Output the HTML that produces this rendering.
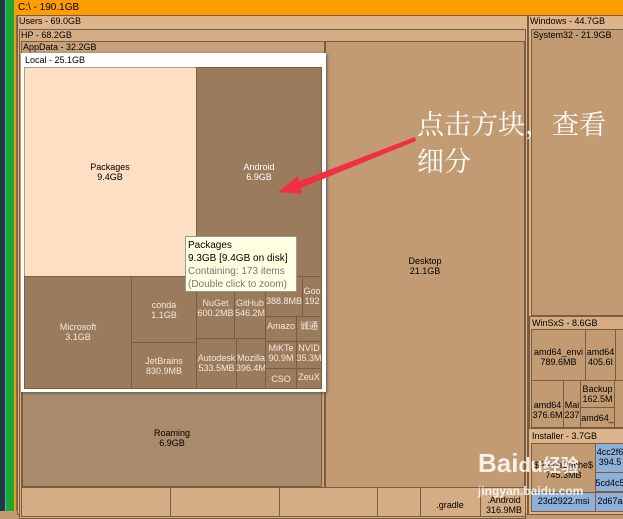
<!DOCTYPE html>
<html><head><meta charset="utf-8"><style>
*{margin:0;padding:0}
body{width:623px;height:511px;overflow:hidden;position:relative;background:#c29b73;font-family:"Liberation Sans",Tahoma,sans-serif;font-size:9px;}
.b{position:absolute;box-sizing:border-box;border:1px solid #7a5c40;overflow:hidden}
.l{position:absolute;font-size:9px;color:#000;white-space:nowrap;line-height:12px}
.c{position:absolute;text-align:center;white-space:nowrap;line-height:10px;font-size:9px}
.dk{background:#9a7b5c}
.w{color:#f4eadc}
</style></head><body>
<!-- left strips -->
<div style="position:absolute;left:0;top:0;width:5px;height:511px;background:#1f3b3c"></div>
<div style="position:absolute;left:5px;top:0;width:1px;height:511px;background:#5ad"></div>
<div style="position:absolute;left:6px;top:0;width:8px;height:511px;background:#1aa832"></div>
<div style="position:absolute;left:14px;top:0;width:2px;height:511px;background:#f39a1a"></div>
<div style="position:absolute;left:16px;top:0;width:2px;height:511px;background:#8a6a4a"></div>
<!-- orange header -->
<div style="position:absolute;left:15px;top:0;width:608px;height:15px;background:#ff9c00"></div>
<div class="l" style="left:18px;top:2px;font-size:10px">C:\ - 190.1GB</div>
<!-- Users -->
<div class="b" style="left:17px;top:15px;width:511px;height:500px;background:#ddb58c"></div>
<div class="l" style="left:19px;top:15px">Users - 69.0GB</div>
<!-- HP -->
<div class="b" style="left:19px;top:29px;width:507px;height:490px;background:#d5ad85"></div>
<div class="l" style="left:21px;top:29px">HP - 68.2GB</div>
<!-- Desktop -->
<div class="b" style="left:325px;top:41px;width:200px;height:447px;background:#c29b73"></div>
<div class="c" style="left:400px;top:256px;width:50px">Desktop<br>21.1GB</div>
<!-- AppData -->
<div class="b" style="left:21px;top:41px;width:304px;height:447px;background:#c9a27b"></div>
<div class="l" style="left:23px;top:41px">AppData - 32.2GB</div>
<!-- Roaming -->
<div class="b dk" style="left:22px;top:390px;width:300px;height:97px;background:#a98a6a"></div>
<div class="c" style="left:147px;top:428px;width:50px">Roaming<br>6.9GB</div>
<!-- bottom row -->
<div class="b" style="left:21px;top:487px;width:150px;height:30px"></div>
<div class="b" style="left:170px;top:487px;width:110px;height:30px"></div>
<div class="b" style="left:279px;top:487px;width:99px;height:30px"></div>
<div class="b" style="left:377px;top:487px;width:44px;height:30px"></div>
<div class="b" style="left:420px;top:487px;width:61px;height:30px"></div>
<div class="c" style="left:430px;top:500px;width:40px">.gradle</div>
<div class="b" style="left:480px;top:487px;width:46px;height:30px"></div>
<div class="c" style="left:482px;top:495px;width:44px">.Android<br>316.9MB</div>
<!-- Local -->
<div style="position:absolute;left:21px;top:53px;width:305px;height:339px;background:#fff;box-shadow:1px 1px 3px #555"></div>
<div class="l" style="left:25px;top:54px;color:#000">Local - 25.1GB</div>
<div class="b" style="left:24px;top:67px;width:173px;height:210px;background:#fddfc3;border-color:#b89a7a"></div>
<div class="c" style="left:85px;top:162px;width:50px">Packages<br>9.4GB</div>
<div class="b dk" style="left:196px;top:67px;width:126px;height:210px"></div>
<div class="c w" style="left:234px;top:162px;width:50px;color:#fff">Android<br>6.9GB</div>
<div class="b dk" style="left:24px;top:276px;width:108px;height:113px"></div>
<div class="c w" style="left:53px;top:322px;width:50px">Microsoft<br>3.1GB</div>
<div class="b dk" style="left:131px;top:276px;width:66px;height:67px"></div>
<div class="c w" style="left:139px;top:300px;width:50px">conda<br>1.1GB</div>
<div class="b dk" style="left:131px;top:342px;width:66px;height:47px"></div>
<div class="c w" style="left:139px;top:356px;width:50px">JetBrains<br>830.9MB</div>
<div class="b dk" style="left:196px;top:276px;width:39px;height:63px"></div>
<div class="c w" style="left:196px;top:298px;width:39px">NuGet<br>600.2MB</div>
<div class="b dk" style="left:234px;top:276px;width:32px;height:63px"></div>
<div class="c w" style="left:234px;top:298px;width:32px">GitHub<br>546.2M</div>
<div class="b dk" style="left:265px;top:276px;width:38px;height:41px"></div>
<div class="c w" style="left:265px;top:296px;width:38px">388.8MB</div>
<div class="b dk" style="left:302px;top:276px;width:20px;height:41px"></div>
<div class="c w" style="left:302px;top:286px;width:20px">Goo<br>192</div>
<div class="b dk" style="left:265px;top:316px;width:32px;height:26px"></div>
<div class="c w" style="left:265px;top:321px;width:32px">Amazo</div>
<div class="b dk" style="left:296px;top:316px;width:26px;height:26px"></div>
<div class="c w" style="left:296px;top:321px;width:26px">诚通</div>
<div class="b dk" style="left:196px;top:338px;width:41px;height:51px"></div>
<div class="c w" style="left:196px;top:353px;width:41px">Autodesk<br>533.5MB</div>
<div class="b dk" style="left:236px;top:338px;width:30px;height:51px"></div>
<div class="c w" style="left:236px;top:353px;width:30px">Mozilla<br>396.4M</div>
<div class="b dk" style="left:265px;top:341px;width:32px;height:28px"></div>
<div class="c w" style="left:265px;top:343px;width:32px">MiKTe<br>90.9M</div>
<div class="b dk" style="left:296px;top:341px;width:26px;height:28px"></div>
<div class="c w" style="left:296px;top:343px;width:26px">NVID<br>35.3M</div>
<div class="b dk" style="left:265px;top:368px;width:32px;height:21px"></div>
<div class="c w" style="left:265px;top:374px;width:32px">CSO</div>
<div class="b dk" style="left:296px;top:368px;width:26px;height:21px"></div>
<div class="c w" style="left:296px;top:372px;width:26px">ZeuX</div>
<!-- tooltip -->
<div style="position:absolute;left:185px;top:236px;width:112px;height:56px;box-sizing:border-box;background:#ffffe1;border:1px solid #999;padding:2px 2px;font-size:10px;line-height:13px;white-space:nowrap;overflow:hidden">Packages<br>9.3GB [9.4GB on disk]<br><span style="color:#777">Containing: 173 items<br>(Double click to zoom)</span></div>
<!-- Windows -->
<div class="b" style="left:528px;top:15px;width:96px;height:500px;background:#ddb58c"></div>
<div class="l" style="left:530px;top:15px">Windows - 44.7GB</div>
<div class="b" style="left:531px;top:29px;width:93px;height:287px;background:#c29b73"></div>
<div class="l" style="left:533px;top:29px">System32 - 21.9GB</div>
<div class="b" style="left:529px;top:316px;width:95px;height:113px;background:#d5ad85"></div>
<div class="l" style="left:532px;top:317px">WinSxS - 8.6GB</div>
<div class="b" style="left:531px;top:329px;width:55px;height:52px;background:#c29b73"></div>
<div class="c" style="left:531px;top:347px;width:55px">amd64_envi<br>789.6MB</div>
<div class="b" style="left:585px;top:329px;width:31px;height:52px;background:#c29b73"></div>
<div class="c" style="left:585px;top:347px;width:31px">amd64<br>405.6I</div>
<div class="b" style="left:615px;top:329px;width:10px;height:52px;background:#c29b73"></div>
<div class="b" style="left:531px;top:380px;width:33px;height:48px;background:#c29b73"></div>
<div class="c" style="left:531px;top:400px;width:33px">amd64<br>376.6M</div>
<div class="b" style="left:563px;top:380px;width:18px;height:48px;background:#c29b73"></div>
<div class="c" style="left:563px;top:400px;width:18px">Mai<br>237</div>
<div class="b" style="left:580px;top:380px;width:35px;height:28px;background:#c29b73"></div>
<div class="c" style="left:580px;top:384px;width:35px">Backup<br>162.5M</div>
<div class="b" style="left:580px;top:407px;width:35px;height:21px;background:#c29b73"></div>
<div class="c" style="left:580px;top:413px;width:35px">amd64_</div>
<div class="b" style="left:614px;top:380px;width:10px;height:48px;background:#c29b73"></div>
<div class="l" style="left:532px;top:430px">Installer - 3.7GB</div>
<div class="b" style="left:531px;top:443px;width:65px;height:50px;background:#c29b73"></div>
<div class="c" style="left:531px;top:460px;width:65px">$PatchCache$<br>745.3MB</div>
<div class="b" style="left:595px;top:443px;width:30px;height:30px;background:#8fb0d8"></div>
<div class="c" style="left:595px;top:447px;width:30px">4cc2f6<br>394.5</div>
<div class="b" style="left:595px;top:472px;width:30px;height:20px;background:#8fb0d8"></div>
<div class="c" style="left:595px;top:478px;width:30px">5cd4c5</div>
<div class="b" style="left:531px;top:492px;width:65px;height:20px;background:#8fb0d8"></div>
<div class="c" style="left:531px;top:496px;width:65px">23d2922.msi</div>
<div class="b" style="left:595px;top:492px;width:30px;height:20px;background:#8fb0d8"></div>
<div class="c" style="left:595px;top:496px;width:30px">2d67a</div>
<!-- annotation -->
<svg style="position:absolute;left:0;top:0" width="623" height="511"><polygon points="415,137 292,184 296,190 416,141" fill="#f03040"/><polygon points="278,192 298,176 302,194" fill="#f03040"/></svg>
<div style="position:absolute;left:417px;top:104px;color:#fff;font-family:'Noto Serif CJK SC',serif;font-size:27px;line-height:37px;white-space:nowrap">点击方块，查看<br>细分</div>
<div style="position:absolute;left:478px;top:448px;color:rgba(255,255,255,0.85);font-size:26px;font-weight:bold;font-family:'Liberation Sans','Noto Sans CJK SC',sans-serif">Bai<span style="font-size:20px">du</span><span style="font-size:18px">经验</span></div>
<div style="position:absolute;left:478px;top:484px;color:rgba(255,255,255,0.85);font-size:12px;font-weight:bold">jingyan.baidu.com</div>
</body></html>
